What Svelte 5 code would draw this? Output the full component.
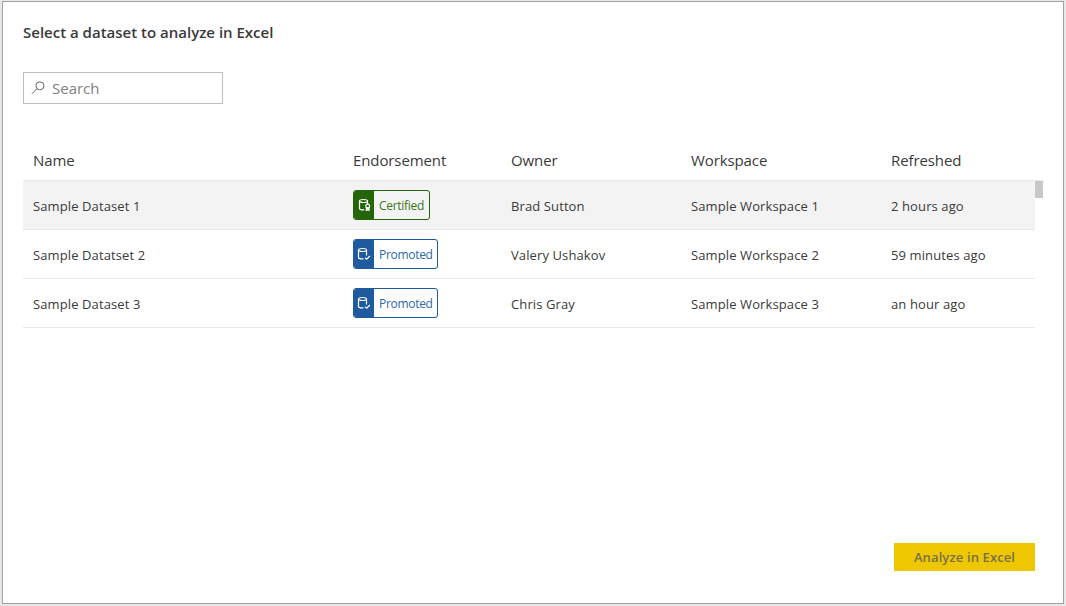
<script>
  const columns = ['Name', 'Endorsement', 'Owner', 'Workspace', 'Refreshed'];
  const rows = [
    { name: 'Sample Dataset 1', badge: 'Certified', owner: 'Brad Sutton', workspace: 'Sample Workspace 1', refreshed: '2 hours ago' },
    { name: 'Sample Datatset 2', badge: 'Promoted', owner: 'Valery Ushakov', workspace: 'Sample Workspace 2', refreshed: '59 minutes ago' },
    { name: 'Sample Dataset 3', badge: 'Promoted', owner: 'Chris Gray', workspace: 'Sample Workspace 3', refreshed: 'an hour ago' },
  ];
</script>

<div class="page">
  <main class="dialog">
    <h1>Select a dataset to analyze in Excel</h1>
    <label class="search">
      <svg width="14" height="14" viewBox="0 0 14 14" fill="none" stroke="#666" stroke-width="1">
        <circle cx="8.9" cy="4.8" r="4" />
        <path d="M6 7.7 1 12.7" />
      </svg>
      <span>Search</span>
    </label>

    <section class="table">
      <div class="row head">
        {#each columns as column}<span>{column}</span>{/each}
      </div>
      <div class="body">
        <div class="rows">
          {#each rows as row, i}
            <div class="row" class:selected={i === 0}>
              <span>{row.name}</span>
              <div>
                <div class="badge" class:certified={row.badge === 'Certified'}>
                  <i>
                    <svg width="14" height="14" viewBox="0 0 14 14" fill="none" stroke="#fff" stroke-width="1.2">
                      <ellipse cx="5.5" cy="3" rx="4" ry="1.5" />
                      {#if row.badge === 'Certified'}
                        <path d="M1.5 3v7.4c0 .9 1.8 1.4 4 1.4h.8M9.5 3v2.7" />
                        <circle cx="9.7" cy="8" r="1.9" />
                        <path d="M8.4 9.6v2.6l1.3-.6 1.3.6V9.6" fill="#fff" />
                      {:else}
                        <path d="M1.5 3v7.4c0 .9 1.8 1.4 4 1.4h1M9.5 3v5.4M8.2 10.8l1.5 1.4 3.2-3.2" />
                      {/if}
                    </svg>
                  </i>
                  <b>{row.badge}</b>
                </div>
              </div>
              <span>{row.owner}</span>
              <span>{row.workspace}</span>
              <span>{row.refreshed}</span>
            </div>
          {/each}
        </div>
        <div class="scroll"><div class="thumb"></div></div>
      </div>
    </section>

    <footer><button>Analyze in Excel</button></footer>
  </main>
</div>

<style>
  :global(body) { margin: 0; background: #e8e8e8; }
  .page { box-sizing: border-box; height: 606px; padding: 1px 2px 2px; }
  .dialog {
    box-sizing: border-box;
    width: 1062px;
    height: 603px;
    border: 1px solid #a0a0a0;
    background: #fff;
    padding: 19px 20px 32px;
    display: flex;
    flex-direction: column;
    color: #3a3a3a;
    font: 13px/20px 'Open Sans', 'Noto Sans', sans-serif;
    letter-spacing: 0.11px;
  }
  h1 { margin: 0; font-size: 15px; line-height: 22px; font-weight: 600; letter-spacing: 0; white-space: nowrap; }
  .search {
    box-sizing: border-box;
    width: 200px;
    height: 32px;
    margin-top: 29px;
    border: 1px solid #bebebe;
    display: flex;
    align-items: center;
    padding-left: 7px;
    gap: 7px;
    color: #808080;
    font-size: 15px;
    letter-spacing: 0;
  }
  .table { margin-top: 36px; }
  .row {
    box-sizing: border-box;
    display: grid;
    grid-template-columns: 320px 158px 180px 200px 1fr;
    align-items: center;
    height: 49px;
    padding-left: 10px;
    border-bottom: 1px solid #e8e8e8;
    white-space: nowrap;
  }
  .row > span { padding-top: 2px; }
  .head { width: 1020px; height: 41px; font-size: 15px; letter-spacing: -0.1px; }
  .head > span { padding-top: 0; }
  .selected { background: #f3f3f3; }
  .body { display: flex; width: 1020px; }
  .rows { flex: 1; }
  .scroll { width: 8px; }
  .thumb { height: 17px; background: #c8c8c8; }
  .badge {
    --c: #1f5a9e;
    box-sizing: border-box;
    width: 85px;
    height: 30px;
    border: 1px solid var(--c);
    border-radius: 3px;
    display: flex;
    overflow: hidden;
    color: #2a68ab;
  }
  .certified { --c: #25650a; width: 77px; color: #3a7820; }
  i { width: 20px; background: var(--c); display: flex; align-items: center; padding-left: 3px; box-sizing: border-box; }
  .certified i { padding-left: 4px; }
  b { font-weight: 400; font-size: 12px; line-height: 30px; padding-left: 5px; letter-spacing: -0.3px; }
  footer { margin-top: auto; display: flex; justify-content: flex-end; padding-right: 8px; }
  button {
    width: 141px;
    height: 28px;
    border: 0;
    padding: 0;
    background: #efc700;
    color: #77704b;
    font: 600 13px/28px 'Open Sans', 'Noto Sans', sans-serif;
    letter-spacing: 0.12px;
  }
</style>
